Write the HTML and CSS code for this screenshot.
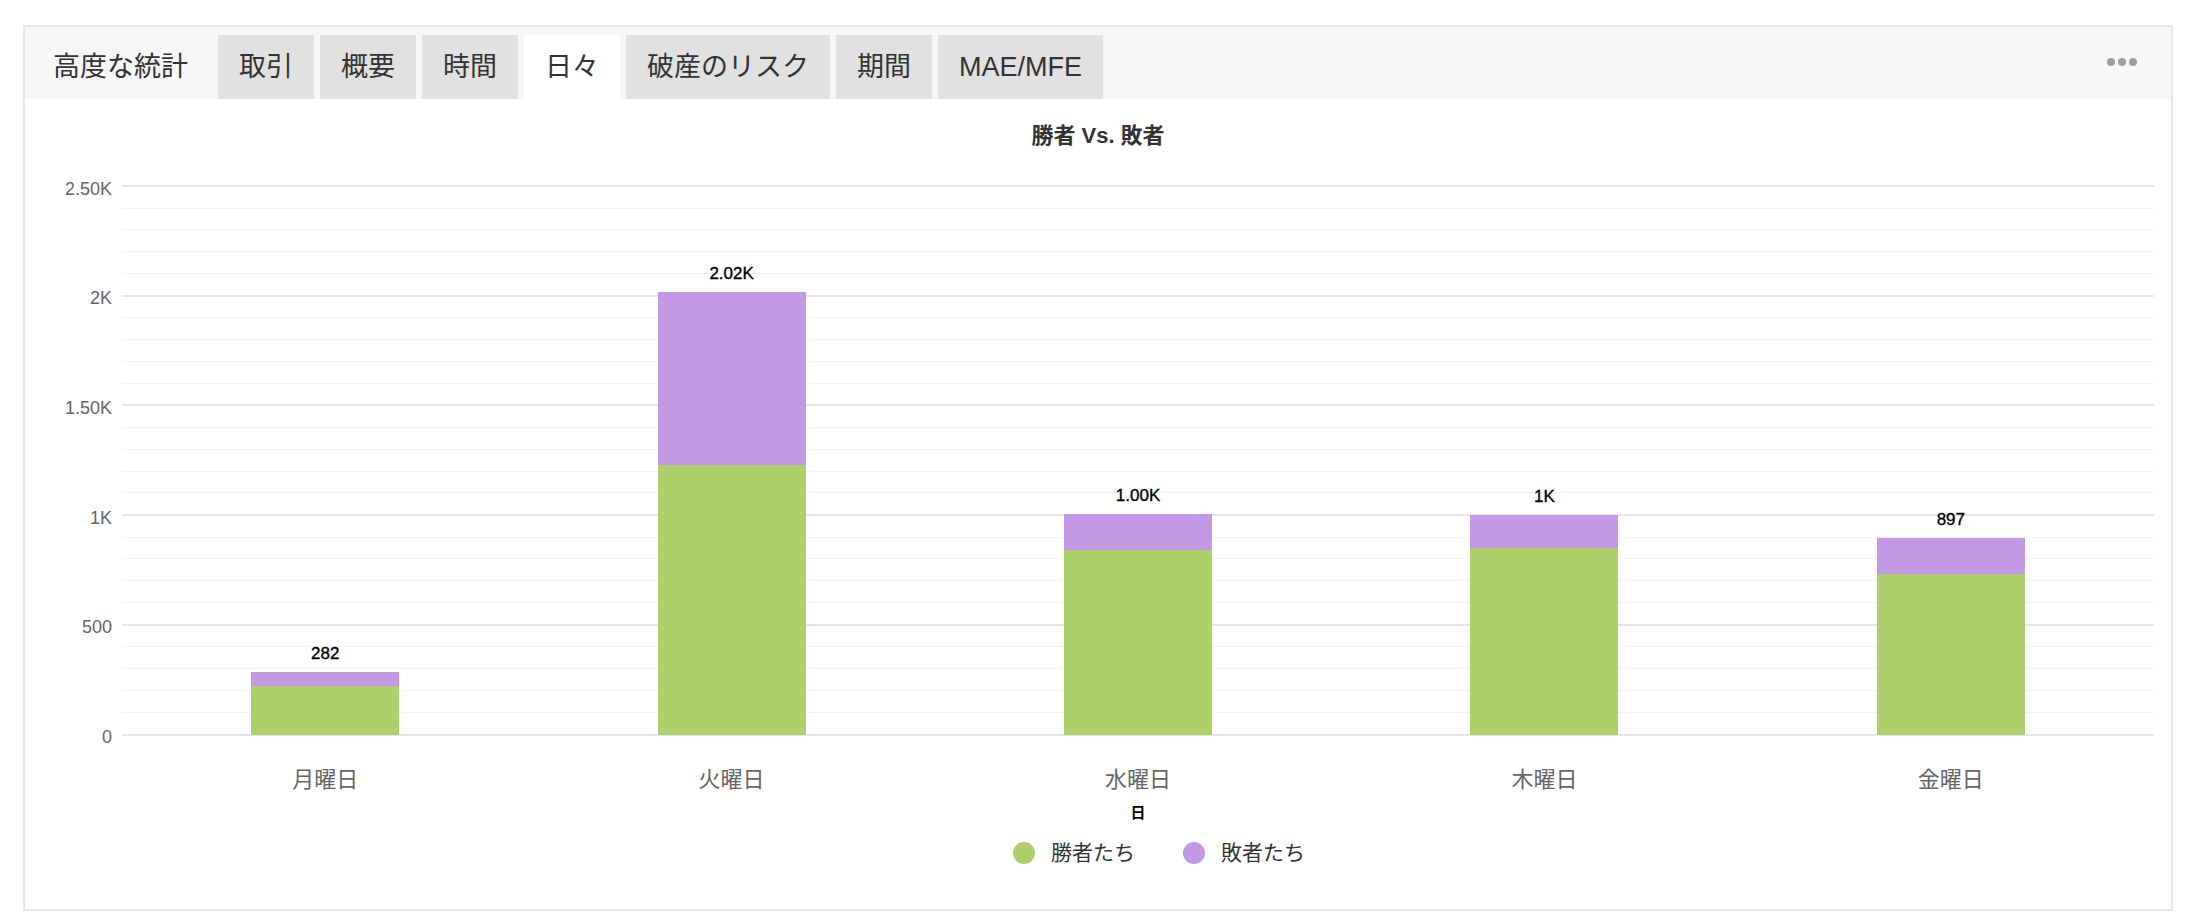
FILE: index.html
```html
<!DOCTYPE html>
<html lang="ja">
<head>
<meta charset="utf-8">
<title>勝者 Vs. 敗者</title>
<link rel="stylesheet" href="styles.css">
</head>
<body>
<div class="panel">
  <div class="tabbar">
    <div class="tab-label">高度な統計</div>
    <div class="tab">取引</div>
    <div class="tab">概要</div>
    <div class="tab">時間</div>
    <div class="tab active">日々</div>
    <div class="tab">破産のリスク</div>
    <div class="tab">期間</div>
    <div class="tab">MAE/MFE</div>
    <div class="dots"><span></span><span></span><span></span></div>
  </div>

  <div class="chart">
    <div class="chart-title">勝者 Vs. 敗者</div>
    <div class="chart-row">
      <div class="yaxis">
        <span>2.50K</span><span>2K</span><span>1.50K</span><span>1K</span><span>500</span><span>0</span>
      </div>
      <div class="plot-wrap">
        <div class="plot">
          <div class="gl major"></div><div class="gl"></div><div class="gl"></div><div class="gl"></div><div class="gl"></div>
          <div class="gl major"></div><div class="gl"></div><div class="gl"></div><div class="gl"></div><div class="gl"></div>
          <div class="gl major"></div><div class="gl"></div><div class="gl"></div><div class="gl"></div><div class="gl"></div>
          <div class="gl major"></div><div class="gl"></div><div class="gl"></div><div class="gl"></div><div class="gl"></div>
          <div class="gl major"></div><div class="gl"></div><div class="gl"></div><div class="gl"></div><div class="gl"></div>
          <div class="bars">
            <div class="cat">
              <div class="seg win" style="height:48.5px"></div>
              <div class="seg lose" style="height:14px"></div>
              <div class="dlabel">282</div>
            </div>
            <div class="cat">
              <div class="seg win" style="height:270px"></div>
              <div class="seg lose" style="height:172.5px"></div>
              <div class="dlabel">2.02K</div>
            </div>
            <div class="cat">
              <div class="seg win" style="height:184.5px"></div>
              <div class="seg lose" style="height:36px"></div>
              <div class="dlabel">1.00K</div>
            </div>
            <div class="cat">
              <div class="seg win" style="height:186.5px"></div>
              <div class="seg lose" style="height:33px"></div>
              <div class="dlabel">1K</div>
            </div>
            <div class="cat">
              <div class="seg win" style="height:160.5px"></div>
              <div class="seg lose" style="height:36px"></div>
              <div class="dlabel">897</div>
            </div>
          </div>
        </div>
        <div class="xlabels">
          <div>月曜日</div><div>火曜日</div><div>水曜日</div><div>木曜日</div><div>金曜日</div>
        </div>
        <div class="xtitle">日</div>
      </div>
    </div>
    <div class="legend">
      <div class="legend-item"><span class="dot win"></span>勝者たち</div>
      <div class="legend-item"><span class="dot lose"></span>敗者たち</div>
    </div>
  </div>
</div>
</body>
</html>
```

FILE: styles.css
```css
* { box-sizing: border-box; }

body {
  margin: 0;
  background: #ffffff;
  font-family: "Liberation Sans", "Noto Sans CJK JP", sans-serif;
  color: #333333;
}

.panel {
  margin: 25px 0 0 23px;
  width: 2150px;
  height: 886px;
  border: 2px solid #e6e6e6;
  background: #ffffff;
}

/* tabs */
.tabbar {
  display: flex;
  align-items: flex-end;
  height: 72px;
  padding: 8px 34px 0 28px;
  background: #f6f6f6;
}

.tab-label,
.tab {
  height: 64px;
  line-height: 64px;
  font-size: 27px;
  color: #333333;
  white-space: nowrap;
}

.tab-label {
  margin-right: 30px;
}

.tab {
  padding: 0 21px;
  margin-right: 6px;
  background: #e1e1e1;
}

.tab.active {
  background: #ffffff;
}

.dots {
  margin-left: auto;
  align-self: flex-start;
  margin-top: 23px;
  display: flex;
  gap: 3px;
}

.dots span {
  width: 8px;
  height: 8px;
  border-radius: 50%;
  background: #9e9e9e;
}

/* chart */
.chart {
  padding-top: 22px;
}

.chart-title {
  text-align: center;
  font-size: 22px;
  line-height: 30px;
  font-weight: bold;
  color: #333333;
}

.chart-row {
  display: flex;
  align-items: flex-start;
  margin-top: 34px;
}

.yaxis {
  width: 87px;
  margin-right: 10px;
  margin-top: -6.5px;
  height: 568.5px;
  display: flex;
  flex-direction: column;
  justify-content: space-between;
  align-items: flex-end;
  font-size: 18px;
  line-height: 20px;
  color: #666666;
}

.plot-wrap {
  width: 2032px;
}

.plot {
  position: relative;
  height: 550.5px;
  display: flex;
  flex-direction: column;
  border-bottom: 2px solid #e6e6e6;
}

.gl {
  flex: 1;
  border-top: 1px solid #f3f3f3;
}

.gl.major {
  border-top: 2px solid #e6e6e6;
}

.bars {
  position: absolute;
  left: 0;
  right: 0;
  top: 0;
  bottom: -1px;
  display: flex;
}

.cat {
  flex: 1;
  display: flex;
  flex-direction: column-reverse;
  align-items: center;
}

.seg {
  width: 148px;
}

.win { background: #add06a; }
.lose { background: #c399e6; }

.dlabel {
  font-size: 17px;
  line-height: 20px;
  font-weight: normal;
  -webkit-text-stroke: 0.35px #000000;
  color: #000000;
  margin-bottom: 8px;
}

.xlabels {
  display: flex;
  margin-top: 29px;
}

.xlabels div {
  flex: 1;
  text-align: center;
  font-size: 22px;
  line-height: 30px;
  color: #666666;
}

.xtitle {
  margin-top: 8px;
  text-align: center;
  font-size: 15px;
  line-height: 20px;
  font-weight: bold;
  color: #000000;
}

.legend {
  display: flex;
  justify-content: center;
  gap: 48px;
  margin-top: 15px;
  padding-left: 122px;
}

.legend-item {
  display: flex;
  align-items: center;
  font-size: 21px;
  line-height: 30px;
  color: #333333;
}

.legend-item .dot {
  width: 22px;
  height: 22px;
  border-radius: 50%;
  margin-right: 16px;
}
```
